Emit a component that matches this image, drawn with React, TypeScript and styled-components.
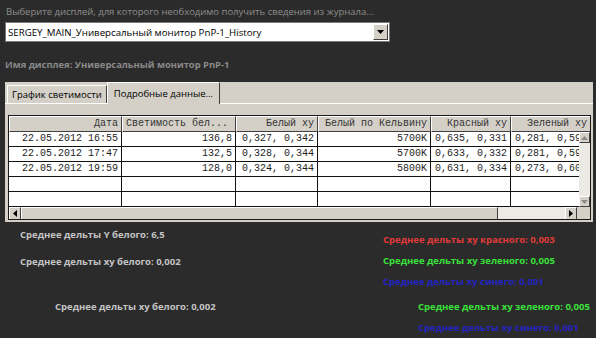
import React from 'react';
import styled, {createGlobalStyle} from 'styled-components';

const GlobalStyle = createGlobalStyle`
  html, body {
    margin: 0;
    padding: 0;
    background: #2b2b2b;
  }
  body {
    width: 596px;
    height: 338px;
    overflow: hidden;
    font-family: 'Open Sans', 'Noto Sans', sans-serif;
    -webkit-font-smoothing: antialiased;
  }
`;

type Row = {
  date: string;
  lum: string;
  whiteXy: string;
  kelvin: string;
  redXy: string;
  greenXy: string;
};

const rows: Row[] = [
  {date: '22.05.2012 16:55', lum: '136,8', whiteXy: '0,327, 0,342', kelvin: '5700K', redXy: '0,635, 0,331', greenXy: '0,281, 0,592'},
  {date: '22.05.2012 17:47', lum: '132,5', whiteXy: '0,328, 0,344', kelvin: '5700K', redXy: '0,633, 0,332', greenXy: '0,281, 0,593'},
  {date: '22.05.2012 19:59', lum: '128,0', whiteXy: '0,324, 0,344', kelvin: '5800K', redXy: '0,631, 0,334', greenXy: '0,273, 0,601'},
];

// ширины колонок таблицы
const columns = [
  {title: 'Дата', width: 113},
  {title: 'Светимость бел...', width: 114, left: true},
  {title: 'Белый xy', width: 82},
  {title: 'Белый по Кельвину', width: 113},
  {title: 'Красный xy', width: 80},
  {title: 'Зеленый xy', width: 80},
];

const Page = styled.div`
  display: flex;
  flex-direction: column;
  padding: 4px 3px 0 5px;
`;

const Hint = styled.div`
  color: #8e8e8e;
  font-size: 9.5px;
  line-height: 16px;
  padding-left: 1px;
`;

const Combo = styled.div`
  margin-top: 2px;
  width: 385px;
  height: 20px;
  box-sizing: border-box;
  background: #fff;
  border: 1px solid #7a7a7a;
  display: flex;
  align-items: center;
  justify-content: space-between;
  padding: 0 1px 0 2px;
  font-size: 9.7px;
  color: #000;
`;

const ComboButton = styled.div`
  width: 15px;
  height: 16px;
  box-sizing: border-box;
  background: #d4d0c8;
  border: 1px solid;
  border-color: #fff #404040 #404040 #fff;
  display: flex;
  align-items: center;
  justify-content: center;
`;

const DisplayName = styled.div`
  margin-top: 16px;
  color: #8a8a8a;
  font-size: 9.4px;
  font-weight: 700;
  line-height: 14px;
`;

const TabControl = styled.div`
  margin-top: 10px;
  height: 140px;
  background: #d4d0c8;
  display: flex;
  flex-direction: column;
`;

const TabStrip = styled.div`
  display: flex;
  align-items: flex-end;
  height: 21px;
  padding-left: 2px;
  border-bottom: 1px solid #fff;
`;

const Tab = styled.div<{$active?: boolean}>`
  box-sizing: border-box;
  height: ${p => (p.$active ? 22 : 18)}px;
  margin-bottom: ${p => (p.$active ? -1 : 0)}px;
  padding: 0 ${p => (p.$active ? 6 : 4)}px;
  display: flex;
  align-items: center;
  background: #d4d0c8;
  border: 1px solid;
  border-color: #fff #404040 transparent #fff;
  border-bottom: none;
  font-size: 9.5px;
  color: #000;
  position: relative;
  z-index: ${p => (p.$active ? 1 : 0)};
`;

const TabPanel = styled.div`
  flex: 1;
  padding: 11px 0 0 3px;
`;

const GridFrame = styled.div`
  width: 583px;
  height: 105px;
  box-sizing: border-box;
  border: 1px solid #1a1a1a;
  background: #fff;
  display: flex;
  flex-direction: column;
  overflow: hidden;
  font-family: 'Liberation Mono', 'DejaVu Sans Mono', monospace;
  font-size: 10px;
  color: #1e1e1e;
`;

const HeaderRow = styled.div`
  display: flex;
  height: 16px;
  flex: none;
`;

const HeaderCell = styled.div<{$w: number; $left?: boolean}>`
  flex: none;
  width: ${p => p.$w}px;
  box-sizing: border-box;
  background: #d4d0c8;
  border: 1px solid;
  border-color: #fff #404040 #404040 #fff;
  text-align: ${p => (p.$left ? 'left' : 'right')};
  padding: 0 3px;
  line-height: 14px;
  white-space: nowrap;
  overflow: hidden;
  color: #333;
`;

const Middle = styled.div`
  display: flex;
  height: 75px;
  flex: none;
`;

const Body = styled.div`
  flex: 1;
  overflow: hidden;
`;

const DataRow = styled.div`
  display: flex;
  height: 15px;
  box-sizing: border-box;
  border-bottom: 1px solid #111;
`;

const DataCell = styled.div<{$w: number}>`
  flex: none;
  width: ${p => p.$w}px;
  box-sizing: border-box;
  border-right: 1px solid #111;
  text-align: right;
  padding: 0 3px;
  line-height: 14px;
  white-space: nowrap;
  overflow: hidden;
  color: #1e1e1e;
`;

const ScrollV = styled.div`
  width: 11px;
  flex: none;
  display: flex;
  flex-direction: column;
  background: #eceae4;
`;

const ScrollH = styled.div`
  display: flex;
  height: 13px;
  flex: none;
  background: #eceae4;
`;

const ArrowBtn = styled.div<{$w: number; $h: number}>`
  width: ${p => p.$w}px;
  height: ${p => p.$h}px;
  flex: none;
  box-sizing: border-box;
  background: #d4d0c8;
  border: 1px solid;
  border-color: #fff #404040 #404040 #fff;
  display: flex;
  align-items: center;
  justify-content: center;
`;

const Track = styled.div`
  flex: 1;
`;

const Thumb = styled.div`
  width: 477px;
  flex: none;
  box-sizing: border-box;
  background: #d4d0c8;
  border: 1px solid;
  border-color: #fff #404040 #404040 #fff;
`;

const Corner = styled.div`
  width: 13px;
  flex: none;
  background: #d4d0c8;
`;

const Stats = styled.div`
  display: flex;
  flex-direction: column;
  font-size: 9.5px;
  font-weight: 700;
`;

const StatGroup = styled.div<{$left: number; $top: number}>`
  display: grid;
  grid-template-columns: 363px auto;
  align-items: start;
  padding: ${p => p.$top}px 0 0 ${p => p.$left}px;
`;

const StatColumn = styled.div<{$gap: number; $pad?: number}>`
  display: flex;
  flex-direction: column;
  gap: ${p => p.$gap}px;
  padding-top: ${p => p.$pad || 0}px;
`;

const Stat = styled.div<{$color: string}>`
  color: ${p => p.$color};
  line-height: 14px;
  white-space: nowrap;
`;

const Triangle = ({dir}: {dir: 'up' | 'down' | 'left' | 'right'}) => {
  const pts = {
    up: '0,4 7,4 3.5,0',
    down: '0,0 7,0 3.5,4',
    left: '4,0 4,7 0,3.5',
    right: '0,0 0,7 4,3.5',
  }[dir];
  const vertical = dir === 'up' || dir === 'down';
  return (
    <svg width={vertical ? 7 : 4} height={vertical ? 4 : 7}>
      <polygon points={pts} fill={vertical ? '#8a8a8a' : '#000'} />
    </svg>
  );
};

export default function App() {
  return (
    <>
      <GlobalStyle />
      <Page>
        <Hint>Выберите дисплей, для которого необходимо получить сведения из журнала...</Hint>
        <Combo>
          <span>SERGEY_MAIN_Универсальный монитор PnP-1_History</span>
          <ComboButton>
            <svg width="7" height="4">
              <polygon points="0,0 7,0 3.5,4" fill="#000" />
            </svg>
          </ComboButton>
        </Combo>
        <DisplayName>Имя дисплея: Универсальный монитор PnP-1</DisplayName>
        <TabControl>
          <TabStrip>
            <Tab>График светимости</Tab>
            <Tab $active>Подробные данные...</Tab>
          </TabStrip>
          <TabPanel>
            <GridFrame>
              <HeaderRow>
                {columns.map(c => (
                  <HeaderCell key={c.title} $w={c.width} $left={c.left}>
                    {c.title}
                  </HeaderCell>
                ))}
              </HeaderRow>
              <Middle>
                <Body>
                  {[...rows, null, null].map((r, i) => (
                    <DataRow key={i}>
                      <DataCell $w={113}>{r?.date}</DataCell>
                      <DataCell $w={114}>{r?.lum}</DataCell>
                      <DataCell $w={82}>{r?.whiteXy}</DataCell>
                      <DataCell $w={113}>{r?.kelvin}</DataCell>
                      <DataCell $w={80}>{r?.redXy}</DataCell>
                      <DataCell $w={80}>{r?.greenXy}</DataCell>
                    </DataRow>
                  ))}
                </Body>
                <ScrollV>
                  <ArrowBtn $w={11} $h={11}>
                    <Triangle dir="up" />
                  </ArrowBtn>
                  <Track />
                  <ArrowBtn $w={11} $h={11}>
                    <Triangle dir="down" />
                  </ArrowBtn>
                </ScrollV>
              </Middle>
              <ScrollH>
                <ArrowBtn $w={12} $h={13}>
                  <Triangle dir="left" />
                </ArrowBtn>
                <Thumb />
                <Track />
                <ArrowBtn $w={12} $h={13}>
                  <Triangle dir="right" />
                </ArrowBtn>
                <Corner />
              </ScrollH>
            </GridFrame>
          </TabPanel>
        </TabControl>
        <Stats>
          <StatGroup $left={15} $top={6}>
            <StatColumn $gap={13}>
              <Stat $color="#c4c4c4">Среднее дельты Y белого: 6,5</Stat>
              <Stat $color="#c4c4c4">Среднее дельты xy белого: 0,002</Stat>
            </StatColumn>
            <StatColumn $gap={7} $pad={5}>
              <Stat $color="#e23a3a">Среднее дельты xy красного: 0,003</Stat>
              <Stat $color="#3ae23a">Среднее дельты xy зеленого: 0,005</Stat>
              <Stat $color="#2424c0">Среднее дельты xy синего: 0,001</Stat>
            </StatColumn>
          </StatGroup>
          <StatGroup $left={50} $top={11}>
            <StatColumn $gap={0}>
              <Stat $color="#c4c4c4">Среднее дельты xy белого: 0,002</Stat>
            </StatColumn>
            <StatColumn $gap={7}>
              <Stat $color="#3ae23a">Среднее дельты xy зеленого: 0,005</Stat>
              <Stat $color="#2424c0">Среднее дельты xy синего: 0,001</Stat>
            </StatColumn>
          </StatGroup>
        </Stats>
      </Page>
    </>
  );
}
